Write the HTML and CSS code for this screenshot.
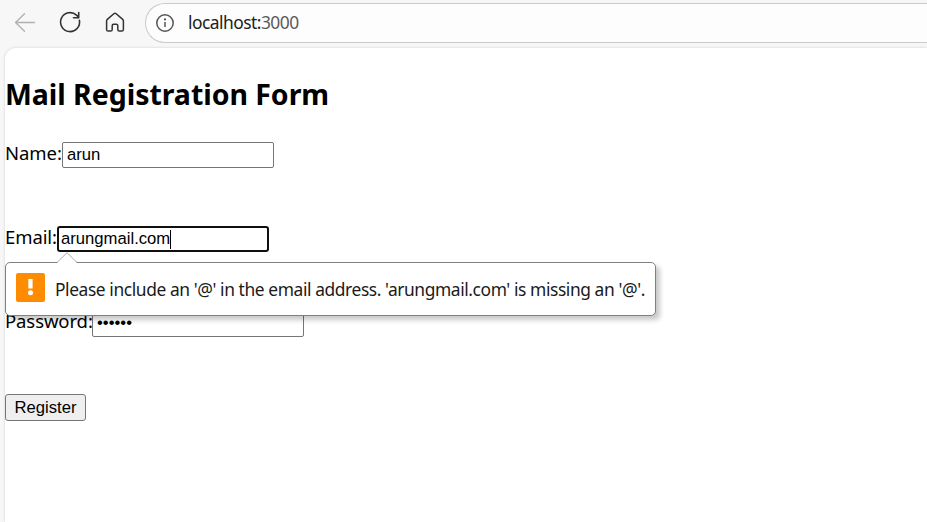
FILE: index.html
```html
<!DOCTYPE html>
<html lang="en">
<head>
<meta charset="utf-8">
<title>Mail Registration Form</title>
<link rel="stylesheet" href="styles.css">
</head>
<body>
<header class="toolbar">
  <svg class="icon back" viewBox="0 0 24 24"><path d="M21.5 12.5H2.5M11.5 3.8l-9 8.7 9 8.7"/></svg>
  <svg class="icon reload" viewBox="0 0 24 24"><path d="M21.4 10.2A9.5 9.5 0 1 1 18.5 5.1L20.6 7.2M20.7 2.5v5.2h-5.2"/></svg>
  <svg class="icon home" viewBox="0 0 24 24"><path d="M3.6 10.9a2 2 0 0 1 .7-1.5L10.800 3.800a1.800 1.800 0 0 1 2.400 0l6.500 5.600a2 2 0 0 1 .7 1.500v8.600a1.600 1.600 0 0 1-1.600 1.600h-2.400a1.600 1.600 0 0 1-1.600-1.600v-3.800a1.400 1.400 0 0 0-1.400-1.400h-2.800a1.400 1.400 0 0 0-1.400 1.400v3.800a1.600 1.600 0 0 1-1.600 1.600H5.200a1.600 1.600 0 0 1-1.600-1.600z"/></svg>
  <div class="address">
    <svg class="info" viewBox="0 0 20 20"><circle cx="10" cy="10" r="8.2"/><path d="M10 9v5"/><circle class="dot" cx="10" cy="6.4" r="1.1"/></svg>
    <span class="url">localhost:<span class="port">3000</span></span>
  </div>
</header>
<main class="page">
  <h2 class="title">Mail Registration Form</h2>
  <form class="form">
    <div class="row"><label class="label name">Name:</label><div class="field">arun</div></div>
    <div class="row">
      <label class="label email">Email:</label><div class="field focused">arungmail.com<span class="caret"></span></div>
      <div class="bubble">
        <svg class="arrow" viewBox="0 0 20 11"><path class="fill" d="M0 11 10 1l10 10z"/><path class="edge" d="M0 10.5 10 .7l10 9.8"/></svg>
        <svg class="warning" viewBox="0 0 29 29"><rect width="29" height="29" rx="2" fill="#ff8c00"/><path d="M12.3 6h4.3v9.5h-4.3z" fill="#fff"/><circle cx="14.500" cy="19.800" r="2.500" fill="#fff"/></svg>
        <span class="message">Please include an '@' in the email address. 'arungmail.com' is missing an '@'.</span>
      </div>
    </div>
    <div class="row"><label class="label password">Password:</label><div class="field dots">••••••</div></div>
    <button class="register" type="button">Register</button>
  </form>
</main>
</body>
</html>
```
FILE: styles.css
```css
* { box-sizing: border-box; }
body {
  margin: 0;
  height: 522px;
  overflow: hidden;
  display: flex;
  flex-direction: column;
  background: #f7f7f7;
  color: #000;
  font-family: "Noto Sans", "Open Sans", sans-serif;
}
.toolbar {
  height: 48px;
  flex: none;
  display: flex;
  align-items: flex-start;
  padding: 3px 0 0 13px;
}
.icon {
  width: 24px;
  height: 24px;
  margin: 7px 21px 0 0;
  fill: none;
  stroke: #333;
  stroke-width: 1.5;
  stroke-linecap: round;
  stroke-linejoin: round;
}
.back { stroke: #b0b0b0; stroke-width: 1.3; }
.reload { stroke-width: 1.6; }
.home { margin-right: 18px; }
.address {
  flex: 1;
  height: 40px;
  display: flex;
  align-items: center;
  padding-left: 9px;
  border: 1px solid #cacaca;
  border-right: 0;
  border-radius: 20px 0 0 20px;
  background: #fdfdfd;
}
.info { width: 20px; height: 20px; fill: none; stroke: #555; stroke-width: 1.5; }
.info .dot { fill: #555; stroke: none; }
.url {
  margin: -2px 0 0 13px;
  font-size: 17.4px;
  line-height: 24px;
  letter-spacing: -.52px;
  white-space: nowrap;
  color: #202020;
}
.port { color: #5a5a5a; }
.page {
  flex: 1;
  margin-left: 5px;
  border-top-left-radius: 11px;
  background: #fff;
  box-shadow: 0 0 3px rgba(0, 0, 0, .16);
}
.title {
  margin: 0;
  padding-top: 26px;
  height: 94px;
  font-size: 28.5px;
  line-height: 40px;
  font-weight: 700;
  letter-spacing: -.05px;
  white-space: nowrap;
}
.form { display: flex; flex-direction: column; align-items: flex-start; }
.row { position: relative; display: flex; height: 26px; margin-bottom: 58px; }
.row:nth-child(2) { margin-bottom: 59px; }
.label { font-size: 18.5px; line-height: 22px; white-space: nowrap; }
.name { width: 57px; letter-spacing: -.05px; }
.email { width: 52px; letter-spacing: -.1px; }
.password { width: 87px; line-height: 20px; letter-spacing: -.1px; }
.field {
  width: 212px;
  height: 26px;
  display: flex;
  align-items: center;
  padding: 0 4px;
  border: 1px solid #767676;
  border-radius: 2px;
  background: #fff;
  font: 16.67px/20px "Liberation Sans", sans-serif;
}
.focused { border: 2px solid #101010; border-radius: 3px; padding: 0 2px; }
.caret { width: 1px; height: 19px; background: #000; }
.dots { padding-bottom: 3px; }
.bubble {
  position: absolute;
  z-index: 2;
  top: 36px;
  left: 0;
  width: 651px;
  height: 54px;
  display: flex;
  align-items: center;
  padding-left: 10px;
  border: 1px solid #808080;
  border-radius: 5px;
  background: #fff;
  box-shadow: 4px 4px 5px rgba(0, 0, 0, .22);
}
.arrow { position: absolute; left: 51px; top: -11px; width: 20px; height: 11px; }
.arrow .fill { fill: #fff; }
.arrow .edge { fill: none; stroke: #aaa; }
.warning { width: 29px; height: 29px; flex: none; margin-bottom: 3px; }
.message {
  margin-left: 10px;
  font-size: 17.4px;
  line-height: 24px;
  letter-spacing: -.41px;
  white-space: nowrap;
  color: #1a1a1a;
}
.register {
  width: 81px;
  height: 27px;
  margin: -1px 0 0;
  padding: 0;
  border: 1px solid #767676;
  border-radius: 3px;
  background: #efefef;
  color: #000;
  font: 16.67px "Liberation Sans", sans-serif;
}
```
